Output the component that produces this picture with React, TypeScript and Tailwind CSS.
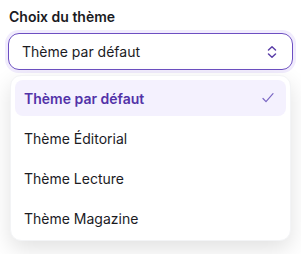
import React from "react";

// Theme picker: a select shown open, with its options list below.

const THEMES = ["Thème par défaut", "Thème Éditorial", "Thème Lecture", "Thème Magazine"];

function Chevrons() {
  return (
    <svg width="12" height="16" viewBox="0 0 12 16" fill="none" stroke="#5b3fa8" strokeWidth="1.5" strokeLinecap="round" strokeLinejoin="round">
      <path d="M2.5 6l3.5-3.2 3.5 3.2" />
      <path d="M2.5 10l3.5 3.2 3.5-3.2" />
    </svg>
  );
}

function Check() {
  return (
    <svg width="12" height="10" viewBox="0 0 12 10" fill="none" stroke="#7b68c4" strokeWidth="1.2" strokeLinecap="round" strokeLinejoin="round">
      <path d="M1 5.5l3 3.2 7-8" />
    </svg>
  );
}

export default function App() {
  const [value] = React.useState(THEMES[0]);

  return (
    <div className="w-[301px] h-[254px] bg-white px-2 pt-2 font-['Inter',sans-serif] text-[#1b1b1f]">
      <label className="block pl-px text-[14px] font-semibold leading-[18px]">Choix du thème</label>

      <button className="mt-[7px] flex h-[37px] w-full items-center justify-between rounded-[11px] border border-[#6d4fc2] pl-[13px] pr-[14px] text-[14px] shadow-[0_0_0_3px_#f1ecfd]">
        <span>{value}</span>
        <Chevrons />
      </button>

      <div className="mx-[2px] mt-[5px] flex flex-col gap-1 rounded-[11px] border border-gray-100 bg-white p-1 shadow-[0_8px_22px_rgba(0,0,0,0.12)]">
        {THEMES.map((t) => {
          const active = t === value;
          return (
            <div
              key={t}
              className={
                active
                  ? "flex h-9 items-center justify-between rounded-lg bg-[#f4f1fe] pl-[9px] pr-[12px] text-[14px] font-semibold text-[#5232a8]"
                  : "flex h-9 items-center justify-between rounded-lg pl-[9px] pr-[12px] text-[14px]"
              }
            >
              <span>{t}</span>
              {active && <Check />}
            </div>
          );
        })}
      </div>
    </div>
  );
}
